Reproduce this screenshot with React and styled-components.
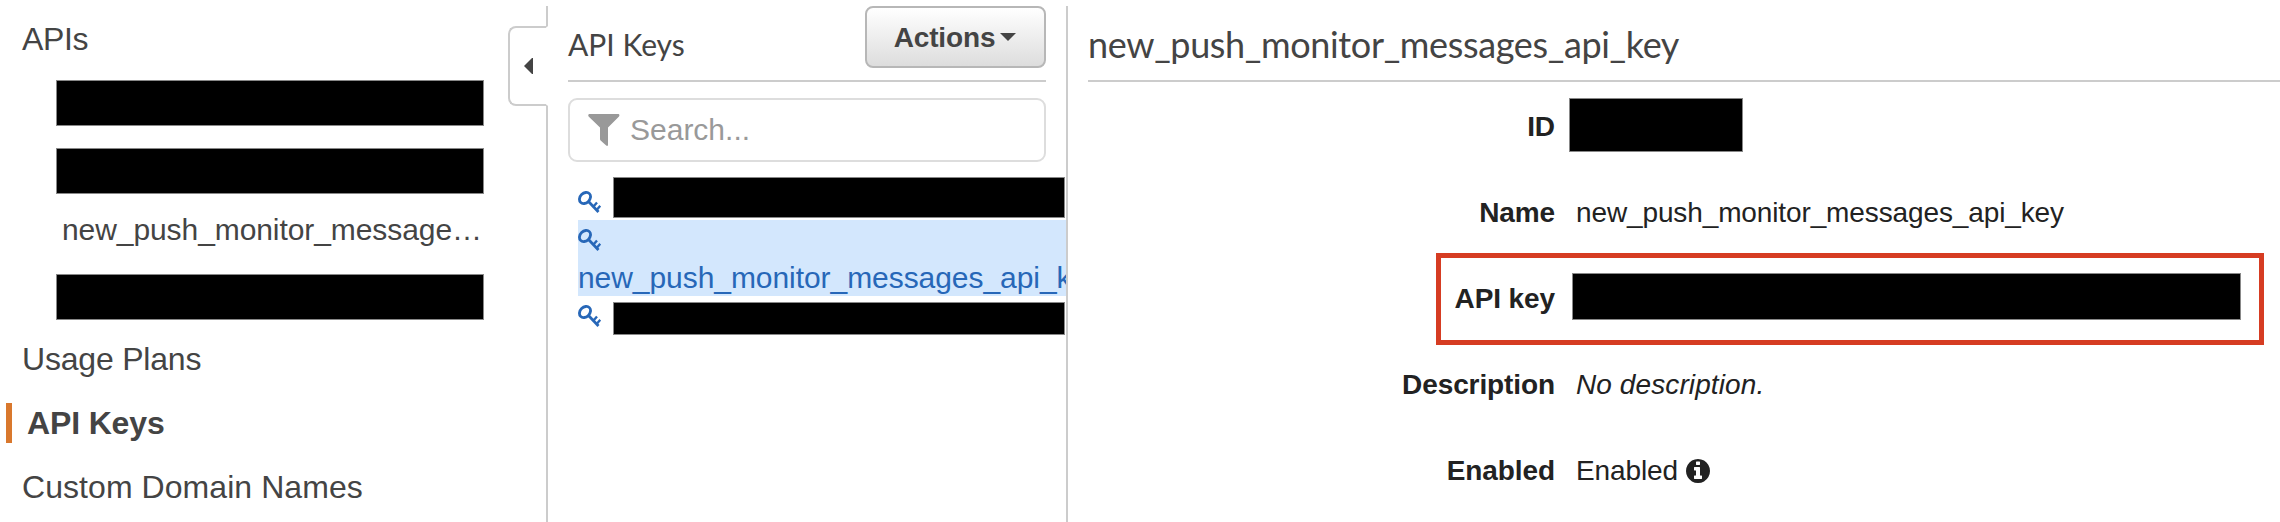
import React from "react";
import styled, { createGlobalStyle, css } from "styled-components";

const sans = `"Liberation Sans", Arial, Helvetica, sans-serif`;
const heading = `Lato, "Liberation Sans", sans-serif`;

const GlobalStyle = createGlobalStyle`
  *, *::before, *::after { box-sizing: border-box; }
  body { margin: 0; background: #fff; font-family: ${sans}; color: #444; }
`;

const Page = styled.div`
  display: flex;
  width: 2280px;
  height: 522px;
  padding-top: 6px;
  overflow: hidden;
`;

const Sidebar = styled.nav`
  position: relative;
  flex: 0 0 548px;
  border-right: 2px solid #ccc;
`;

const NavLink = styled.a`
  display: flex;
  align-items: center;
  height: 64px;
  padding: 2px 0 0 22px;
  font-size: 32px;
  line-height: 40px;
  letter-spacing: ${(p) => p.$tracking || 0}px;
  white-space: nowrap;
  ${(p) =>
    p.$active &&
    css`
      padding-left: 6px;
      font-weight: 700;
      letter-spacing: -0.15px;
    `}
`;

const ActiveMark = styled.span`
  width: 6px;
  height: 40px;
  margin-right: 15px;
  background: #d9782d;
`;

const ApiList = styled.div`
  display: flex;
  flex-direction: column;
  padding: 10px 0 0 56px;
  height: 256px;
`;

const ApiLink = styled.a`
  height: 80px;
  padding-left: 6px;
  font-size: 30px;
  line-height: 72px;
  letter-spacing: -0.08px;
  white-space: nowrap;
`;

const Redaction = styled.span`
  display: block;
  flex: none;
  width: ${(p) => p.$w}px;
  height: ${(p) => p.$h}px;
  margin-bottom: ${(p) => p.$gap || 0}px;
  background: #000;
  border: 1px solid #888;
`;

const CollapseTab = styled.button`
  position: absolute;
  top: 20px;
  right: -2px;
  display: flex;
  align-items: center;
  width: 40px;
  height: 80px;
  padding: 0 0 0 14px;
  border: 2px solid #ccc;
  border-right: 2px solid #fff;
  border-radius: 8px 0 0 8px;
  background: #fff;
`;

const KeysPanel = styled.section`
  flex: 0 0 520px;
  border-right: 2px solid #ccc;
  padding-left: 20px;
  overflow: hidden;
`;

const PanelHeader = styled.header`
  display: flex;
  justify-content: space-between;
  width: 478px;
  height: 76px;
  border-bottom: 2px solid #ccc;
`;

const PanelTitle = styled.h2`
  margin: 20px 0 0;
  font: 400 30px/36px ${heading};
`;

const ActionsButton = styled.button`
  display: flex;
  align-items: center;
  justify-content: center;
  gap: 5px;
  width: 181px;
  height: 62px;
  padding: 1px 1px 0 0;
  border: 2px solid #b7b7b7;
  border-radius: 8px;
  background: linear-gradient(#fff, #ddd);
  color: #444;
  font: 700 28px/32px ${sans};
  letter-spacing: -0.15px;
`;

const Caret = styled.svg`
  margin-bottom: 2px;
`;

const SearchBox = styled.div`
  display: flex;
  align-items: center;
  gap: 10px;
  width: 478px;
  height: 64px;
  margin-top: 16px;
  padding-left: 18px;
  border: 2px solid #ddd;
  border-radius: 9px;
  color: #999;
  font-size: 30px;
`;

const KeyList = styled.div`
  margin-top: 14px;
  padding-left: 10px;
`;

const KeyRow = styled.div`
  display: flex;
  align-items: flex-start;
  gap: 12px;
  height: 44px;
  padding-top: ${(p) => p.$top}px;
`;

const KeySlot = styled.span`
  display: flex;
  width: 23px;
  padding-top: ${(p) => p.$top}px;
`;

const SelectedKey = styled.div`
  height: 76px;
  padding-top: 9px;
  background: #d3e7fd;
  color: #2767b8;
  font-size: 30px;
  line-height: 34px;
  letter-spacing: -0.06px;
  white-space: nowrap;
`;

const SelectedName = styled.div`
  margin-top: 10px;
`;

const KeyGlyph = styled.svg`
  display: block;
`;

const Detail = styled.main`
  flex: 1;
  min-width: 0;
  padding-left: 20px;
  color: #222;
`;

const DetailTitle = styled.h1`
  height: 76px;
  margin: 0;
  padding-top: 16px;
  border-bottom: 2px solid #ccc;
  color: #444;
  font: 400 36px/44px ${heading};
  letter-spacing: -0.35px;
`;

const Fields = styled.dl`
  margin: 0;
  padding-top: 2px;
`;

const Field = styled.div`
  display: flex;
  align-items: center;
  height: 86px;
  font-size: 28px;
  line-height: 32px;
`;

const HighlightedField = styled(Field)`
  width: 828px;
  height: 92px;
  margin: -3px 0 -3px 348px;
  border: 5px solid #d63c22;
`;

const Label = styled.dt`
  width: ${(p) => p.$w || 467}px;
  text-align: right;
  font-weight: 700;
  letter-spacing: -0.1px;
`;

const Value = styled.dd`
  display: flex;
  align-items: center;
  margin: 0 0 0 ${(p) => p.$gap ?? 21}px;
  letter-spacing: ${(p) => (p.$italic ? 0.1 : -0.12)}px;
  font-style: ${(p) => (p.$italic ? "italic" : "normal")};
`;

const InfoGlyph = styled.svg`
  width: 24px;
  height: 24px;
  margin-left: 8px;
`;

const InfoIcon = () => (
  <InfoGlyph viewBox="0 0 1536 1536" fill="#222">
    <path d="M1024 1248v-160q0-14-9-23t-23-9h-96v-512q0-14-9-23t-23-9h-320q-14 0-23 9t-9 23v160q0 14 9 23t23 9h96v320h-96q-14 0-23 9t-9 23v160q0 14 9 23t23 9h448q14 0 23-9t9-23zm-128-896v-160q0-14-9-23t-23-9h-192q-14 0-23 9t-9 23v160q0 14 9 23t23 9h192q14 0 23-9t9-23zm640 416q0 209-103 385.500t-279.500 279.500-385.500 103-385.500-103-279.500-279.500-103-385.500 103-385.500 279.500-279.500 385.500-103 385.500 103 279.500 279.500 103 385.500z" />
  </InfoGlyph>
);

const KeyIcon = () => (
  <KeyGlyph width="23" height="22" viewBox="0 0 23 22" fill="none" stroke="#2767b8">
    <ellipse cx="7" cy="7" rx="6.2" ry="4.8" transform="rotate(-45 7 7)" strokeWidth="2.8" />
    <path d="M10 10L20.5 21" strokeWidth="2.8" />
    <path d="M15.5 15.5L19 11.5M18.8 18.8L22.3 14.8" strokeWidth="2.4" />
  </KeyGlyph>
);

const FunnelIcon = () => (
  <svg width="32" height="32" viewBox="0 0 32 32" fill="#999">
    <path d="M1.2 0H30.6Q32 .8 31 2.4L20 13.4V31Q19.6 32.4 18.2 31.6L12.6 26.4Q12 26 12 25V13.4L.6 2.4Q-.4.8 1.2 0Z" />
  </svg>
);

export default function App() {
  return (
    <>
      <GlobalStyle />
      <Page>
        <Sidebar>
          <NavLink $tracking={-0.4}>APIs</NavLink>
          <ApiList>
            <Redaction $w={428} $h={46} $gap={22} />
            <Redaction $w={428} $h={46} />
            <ApiLink>new_push_monitor_message…</ApiLink>
            <Redaction $w={428} $h={46} />
          </ApiList>
          <NavLink $tracking={-0.2}>Usage Plans</NavLink>
          <NavLink $active>
            <ActiveMark />
            API Keys
          </NavLink>
          <NavLink $tracking={0.06}>Custom Domain Names</NavLink>
          <CollapseTab aria-label="Collapse">
            <svg width="9" height="16" viewBox="0 0 9 16" fill="#444">
              <path d="M9 0V16H8L0 8L8 0Z" />
            </svg>
          </CollapseTab>
        </Sidebar>

        <KeysPanel>
          <PanelHeader>
            <PanelTitle>API Keys</PanelTitle>
            <ActionsButton>
              Actions
              <Caret width="16" height="8" viewBox="0 0 16 8" fill="#444">
                <path d="M0 0H16L8 8Z" />
              </Caret>
            </ActionsButton>
          </PanelHeader>
          <SearchBox>
            <FunnelIcon />
            Search...
          </SearchBox>
          <KeyList>
            <KeyRow $top={1}>
              <KeySlot $top={14}>
                <KeyIcon />
              </KeySlot>
              <Redaction $w={452} $h={41} />
            </KeyRow>
            <SelectedKey>
              <KeyIcon />
              <SelectedName>new_push_monitor_messages_api_key</SelectedName>
            </SelectedKey>
            <KeyRow $top={6}>
              <KeySlot $top={3}>
                <KeyIcon />
              </KeySlot>
              <Redaction $w={452} $h={33} />
            </KeyRow>
          </KeyList>
        </KeysPanel>

        <Detail>
          <DetailTitle>new_push_monitor_messages_api_key</DetailTitle>
          <Fields>
            <Field>
              <Label>ID</Label>
              <Value $gap={14}>
                <Redaction $w={174} $h={54} $gap={4} />
              </Value>
            </Field>
            <Field>
              <Label>Name</Label>
              <Value>new_push_monitor_messages_api_key</Value>
            </Field>
            <HighlightedField>
              <Label $w={114}>API key</Label>
              <Value $gap={17}>
                <Redaction $w={669} $h={47} $gap={5} />
              </Value>
            </HighlightedField>
            <Field>
              <Label>Description</Label>
              <Value $italic>No description.</Value>
            </Field>
            <Field>
              <Label>Enabled</Label>
              <Value>
                Enabled
                <InfoIcon />
              </Value>
            </Field>
          </Fields>
        </Detail>
      </Page>
    </>
  );
}
